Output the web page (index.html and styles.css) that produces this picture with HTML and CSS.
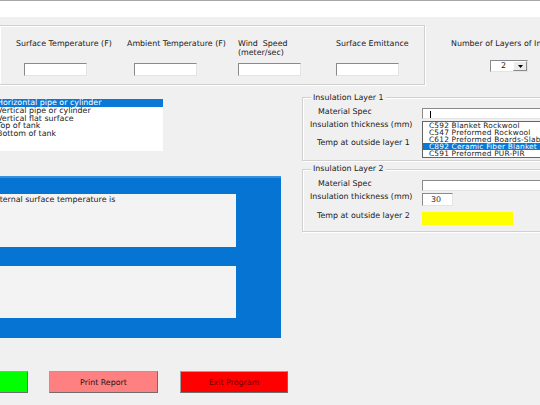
FILE: index.html
```html
<!DOCTYPE html>
<html>
<head>
<meta charset="utf-8">
<link rel="stylesheet" href="styles.css">
</head>
<body>
<div class="titlebar"></div>
<div class="top">
  <div class="frame">
    <div class="field f1"><div class="lbl">Surface Temperature (F)</div><div class="input in-1"></div></div>
    <div class="field f2"><div class="lbl">Ambient Temperature (F)</div><div class="input in-2"></div></div>
    <div class="field f3"><div class="lbl">Wind&nbsp; Speed<br>(meter/sec)</div><div class="input"></div></div>
    <div class="field f4"><div class="lbl">Surface Emittance</div><div class="input"></div></div>
  </div>
  <div class="layers">
    <div class="lbl nowrap">Number of Layers of Insulation</div>
    <div class="combo">
      <span class="combo-val">2</span>
      <span class="combo-btn"><svg width="5" height="3" viewBox="0 0 5 3"><path d="M0 0H5L2.5 3Z" fill="#000"/></svg></span>
    </div>
  </div>
</div>
<div class="main">
  <div class="left">
    <div class="listbox">
      <div class="item sel">Horizontal pipe or cylinder</div>
      <div class="item">Vertical pipe or cylinder</div>
      <div class="item">Vertical flat surface</div>
      <div class="item">Top of tank</div>
      <div class="item">Bottom of tank</div>
    </div>
    <div class="panel">
      <div class="out">External surface temperature is</div>
      <div class="out out2"></div>
    </div>
    <div class="buttons">
      <div class="btn green"></div>
      <div class="btn pink">Print Report</div>
      <div class="btn red">Exit Program</div>
    </div>
  </div>
  <div class="right">
    <div class="group g1">
      <div class="gtitle">Insulation Layer 1</div>
      <div class="row r1"><div class="glbl pl15">Material Spec</div><div class="tbox wide"><span class="caret"></span></div></div>
      <div class="row r2"><div class="glbl pl7">Insulation thickness (mm)</div></div>
      <div class="row r3a"><div class="glbl pl14">Temp at outside layer 1</div></div>
      <div class="droplist">
        <div class="ditem">C592 Blanket Rockwool</div>
        <div class="ditem">C547 Preformed Rockwool</div>
        <div class="ditem">C612 Preformed Boards-Slab</div>
        <div class="ditem dsel">C892 Ceramic Fiber Blanket</div>
        <div class="ditem">C591 Preformed PUR-PIR</div>
      </div>
    </div>
    <div class="group g2">
      <div class="gtitle">Insulation Layer 2</div>
      <div class="row r1"><div class="glbl pl15">Material Spec</div><div class="tbox wide"></div></div>
      <div class="row r2"><div class="glbl pl7">Insulation thickness (mm)</div><div class="tbox small">30</div></div>
      <div class="row r3b"><div class="glbl pl14">Temp at outside layer 2</div><div class="yellow"></div></div>
    </div>
  </div>
</div>
</body>
</html>
```
FILE: styles.css
```css
html, body {
  margin: 0;
  padding: 0;
}
body {
  width: 540px;
  height: 405px;
  overflow: hidden;
  background: #f0f0f0;
  font-family: "DejaVu Sans", "Liberation Sans", sans-serif;
  font-size: 7.9px;
  color: #1a1a1a;
  position: relative;
}
.titlebar {
  height: 16px;
  background: #fff;
  border-top: 1px solid #a8a8a8;
}
.top {
  display: flex;
  margin-top: 8px;
}
.frame {
  display: flex;
  box-sizing: border-box;
  margin-left: -1px;
  width: 426px;
  height: 60px;
  border: 1px solid #d0d0d0;
  box-shadow: inset 1px 1px 0 #fff, 1px 1px 0 #fff;
  padding: 13px 0 0 16px;
  flex-shrink: 0;
}
.field { flex-shrink: 0; }
.f1, .f2 { width: 111px; }
.f3 { width: 98px; }
.f4 { width: 80px; }
.lbl {
  line-height: 9px;
  height: 24px;
  white-space: nowrap;
}
.nowrap { white-space: nowrap; height: 9px; }
.input {
  box-sizing: border-box;
  width: 63px;
  height: 13px;
  background: #fff;
  border: 1px solid;
  border-color: #8a8a8a #e4e4e4 #e4e4e4 #8a8a8a;
}
.in-1 { margin-left: 8px; }
.in-2 { margin-left: 7px; }
.layers {
  margin-left: 26px;
  padding-top: 14px;
  flex-shrink: 0;
}
.combo {
  display: flex;
  box-sizing: border-box;
  margin: 12px 0 0 39px;
  width: 38px;
  height: 12px;
  background: #fff;
  border: 1px solid;
  border-color: #8a8a8a #e4e4e4 #e4e4e4 #8a8a8a;
}
.combo-val {
  flex: 1;
  padding-left: 10px;
  line-height: 10px;
}
.combo-btn {
  box-sizing: border-box;
  width: 14px;
  height: 10px;
  background: #ececec;
  border: 1px solid;
  border-color: #fff #8a8a8a #8a8a8a #fff;
  display: flex;
  align-items: center;
  justify-content: center;
}
.main {
  display: flex;
}
.left {
  width: 302px;
  flex-shrink: 0;
}
.listbox {
  margin: 14px 0 0 -5px;
  width: 168px;
  height: 52px;
  background: #fff;
}
.item {
  height: 7.5px;
  line-height: 7.5px;
  padding-left: 2px;
  white-space: nowrap;
}
.sel {
  background: #0a78d6;
  color: #fff;
  height: 8px;
  line-height: 8px;
}
.panel {
  box-sizing: border-box;
  margin: 25px 0 0 -20px;
  width: 301px;
  height: 162px;
  background: #0674d3;
  border-top: 2px solid #3a8fdc;
  padding: 16px 0 0 8px;
}
.out {
  box-sizing: border-box;
  width: 248px;
  height: 53px;
  background: #f3f3f3;
  padding: 1px 0 0 2px;
  line-height: 9px;
  white-space: nowrap;
}
.out2 {
  margin-top: 19px;
  height: 52px;
}
.buttons {
  display: flex;
  margin: 33px 0 0 -81px;
}
.btn {
  box-sizing: border-box;
  width: 109px;
  height: 22px;
  border: 1px solid;
  border-color: #a0a0a0 #6e6e6e #6e6e6e #a0a0a0;
  display: flex;
  align-items: center;
  justify-content: center;
  white-space: nowrap;
}
.green { background: #00ff00; }
.pink { background: #ff8080; margin-left: 21px; color: #2a1010; }
.red { background: #ff0000; margin-left: 22px; width: 108px; color: #6a0000; }
.right {
  flex-shrink: 0;
  width: 260px;
}
.group {
  position: relative;
  box-sizing: border-box;
  width: 260px;
  border: 1px solid #d0d0d0;
  box-shadow: inset 1px 1px 0 #fff, 1px 1px 0 #fff;
}
.g1 {
  margin-top: 12px;
  padding-bottom: 8px;
}
.g2 {
  margin-top: 8px;
  padding-bottom: 6px;
}
.gtitle {
  width: fit-content;
  margin: -5px 0 0 8px;
  padding: 0 2px;
  background: #f0f0f0;
  line-height: 10px;
  height: 10px;
  white-space: nowrap;
}
.g2 .gtitle { margin-top: -6px; }
.row {
  display: flex;
  height: 13px;
  margin-top: 2px;
}
.g1 .row.r1 { margin-top: 5px; height: 11px; }
.g2 .row.r1 { margin-top: 6px; height: 11px; }
.row.r3a { margin-top: 5px; }
.row.r3b { margin-top: 6px; }
.glbl {
  width: 119px;
  flex-shrink: 0;
  box-sizing: border-box;
  margin-top: -1px;
  line-height: 10px;
  white-space: nowrap;
}
.pl15 { padding-left: 15px; }
.pl7 { padding-left: 7px; }
.pl14 { padding-left: 14px; }
.tbox {
  box-sizing: border-box;
  background: #fff;
  border: 1px solid;
  border-color: #8a8a8a #e4e4e4 #e4e4e4 #8a8a8a;
  position: relative;
}
.wide { width: 140px; height: 11px; }
.small {
  width: 31px;
  height: 13px;
  padding-left: 8px;
  line-height: 11px;
}
.caret {
  position: absolute;
  left: 7px;
  top: 2px;
  width: 1px;
  height: 7px;
  background: #000;
}
.yellow {
  width: 91px;
  height: 13px;
  background: #ffff00;
}
.droplist {
  position: absolute;
  left: 119px;
  top: 23px;
  width: 150px;
  box-sizing: border-box;
  background: #fff;
  border: 1px solid #646464;
}
.ditem {
  height: 7.1px;
  line-height: 7.1px;
  padding-left: 6px;
  font-size: 7.4px;
  letter-spacing: 0.2px;
  white-space: nowrap;
}
.dsel {
  background: #0a78d6;
  color: #fff;
}
```
